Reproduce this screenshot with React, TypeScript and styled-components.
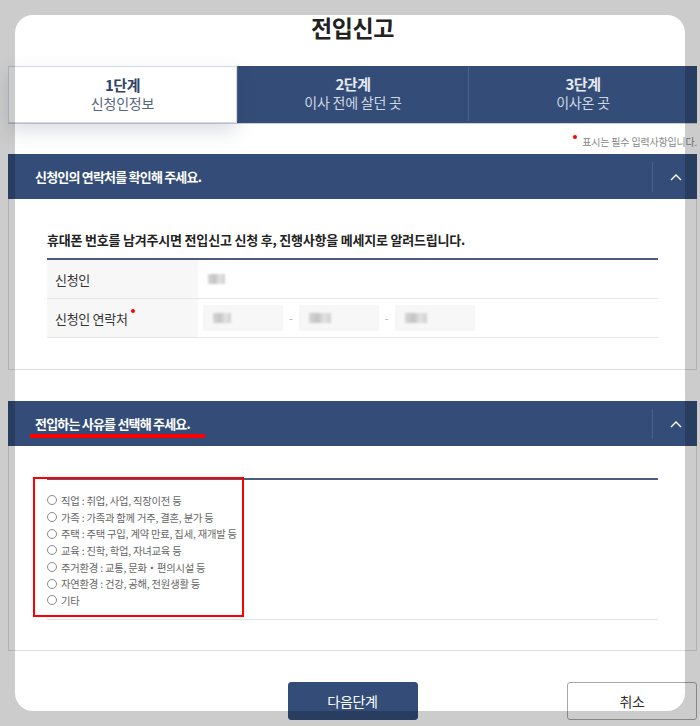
import styled, { createGlobalStyle } from "styled-components";

const GlobalStyle = createGlobalStyle`
  html, body {
    margin: 0;
    padding: 0;
    background: #fff;
  }
  body {
    font-family: "Noto Sans CJK KR", "Noto Sans", sans-serif;
    color: #222;
    overflow: hidden;
  }
`;

const navy = "#344d78";

const Page = styled.div`
  width: 689px;
  margin-left: 8px;
  padding-top: 12px;
`;

const Title = styled.h1`
  margin: 0;
  text-align: center;
  font-size: 23px;
  line-height: 30px;
  font-weight: 700;
  letter-spacing: -0.4px;
  color: #222;
`;

const Steps = styled.ul`
  list-style: none;
  margin: 24px 0 0;
  padding: 0;
  display: grid;
  grid-template-columns: 229px 231px 229px;
  background: ${navy};
  border-bottom: 1px solid #c9d1de;
`;

const Step = styled.li<{ $active?: boolean }>`
  height: 55px;
  display: flex;
  flex-direction: column;
  align-items: center;
  justify-content: center;
  background: ${(p) => (p.$active ? "#fff" : "transparent")};
  box-shadow: ${(p) => (p.$active ? "0 8px 18px rgba(40, 50, 80, 0.16)" : "none")};
  border: ${(p) => (p.$active ? "1px solid #d3d8e1" : "none")};
  position: relative;
  z-index: ${(p) => (p.$active ? 1 : 0)};

  & + & {
    border-left: 1px solid #4b6289;
  }

  strong {
    font-size: 15px;
    line-height: 18px;
    font-weight: 700;
    letter-spacing: -0.5px;
    color: ${(p) => (p.$active ? "#2e436a" : "#e6eaf2")};
  }
  span {
    font-size: 14px;
    line-height: 19px;
    letter-spacing: -0.2px;
    color: ${(p) => (p.$active ? "#556684" : "#d0d7e3")};
  }
`;

const Note = styled.p`
  margin: 0;
  padding: 11px 0 5px;
  text-align: right;
  font-size: 10px;
  line-height: 14px;
  color: #888;
  letter-spacing: -0.2px;
`;

const Dot = styled.i`
  display: inline-block;
  width: 4px;
  height: 4px;
  border-radius: 50%;
  background: #f00;
  vertical-align: top;
  margin: 0 5px 0 0;
`;

const SectionHead = styled.div`
  position: relative;
  height: 45px;
  background: ${navy};
  display: flex;
  align-items: center;
  padding-left: 27px;

  h2 {
    flex: 1;
    margin: 0;
    font-size: 13px;
    font-weight: 700;
    letter-spacing: -0.8px;
    color: #fff;
  }
`;

const Toggle = styled.button`
  width: 45px;
  height: 30px;
  border: none;
  border-left: 1px solid #4b6289;
  background: transparent;
  display: flex;
  align-items: center;
  justify-content: center;
  padding: 0 0 0 2px;
`;

const Underline = styled.i`
  position: absolute;
  left: 22px;
  top: 33px;
  width: 175px;
  height: 4px;
  background: #f00;
`;

const SectionBody = styled.div<{ $top: number; $bottom: number }>`
  position: relative;
  border: 1px solid #dedede;
  border-top: none;
  padding: ${(p) => p.$top}px 38px ${(p) => p.$bottom}px;
`;

const Lead = styled.p`
  margin: 0 0 9px;
  font-size: 13px;
  line-height: 18px;
  font-weight: 700;
  letter-spacing: -0.2px;
  color: #222;
`;

const Table = styled.div`
  border-top: 2px solid #4a5d80;
`;

const Row = styled.div`
  display: grid;
  grid-template-columns: 151px 1fr;
  height: 38px;
  border-bottom: 1px solid #e6e6e6;
`;

const Label = styled.div`
  background: #f7f7f7;
  display: flex;
  align-items: center;
  padding-left: 8px;
  font-size: 13px;
  letter-spacing: -0.3px;
  color: #333;

  i {
    align-self: flex-start;
    margin: 10px 0 0 3px;
  }
`;

const Value = styled.div`
  display: flex;
  align-items: center;
  padding-left: 5px;
  gap: 6px;
  color: #aaa;
  font-size: 11px;
`;

const Masked = styled.span<{ $w: number }>`
  display: inline-block;
  width: ${(p) => p.$w}px;
  height: 10px;
  background: linear-gradient(90deg, #d9d4d9, #c4c4c4 40%, #e2e2e2 70%, #cfcfcf);
  filter: blur(1.2px);
`;

const PhoneBox = styled.span`
  width: 80px;
  height: 26px;
  background: #f7f7f7;
  display: flex;
  align-items: center;
  padding-left: 10px;
  box-sizing: border-box;
`;

const List = styled.ul`
  list-style: none;
  margin: 0;
  padding: 12px 0 10px;
  border-top: 2px solid #4a5d80;
  border-bottom: 1px solid #e3e3e3;
`;

const Item = styled.li`
  display: flex;
  align-items: center;
  gap: 4px;
  height: 16.7px;
  font-size: 10.3px;
  letter-spacing: -0.2px;
  color: #666;
`;

const Radio = styled.span`
  width: 8px;
  height: 8px;
  border: 1px solid #888;
  border-radius: 50%;
  background: #fff;
`;

const Highlight = styled.div`
  position: absolute;
  left: 24px;
  top: 31px;
  width: 207px;
  height: 136px;
  border: 2px solid #f00;
`;

const Actions = styled.div`
  margin-top: 31px;
  display: grid;
  grid-template-columns: 1fr 130px 1fr;
  align-items: center;
`;

const Button = styled.button<{ $primary?: boolean }>`
  grid-column: ${(p) => (p.$primary ? 2 : 3)};
  justify-self: ${(p) => (p.$primary ? "center" : "end")};
  width: 130px;
  height: 38px;
  border-radius: 3px;
  font-family: inherit;
  font-size: 14px;
  letter-spacing: -0.3px;
  border: 1px solid ${(p) => (p.$primary ? navy : "#a8a8a8")};
  background: ${(p) => (p.$primary ? navy : "#fff")};
  color: ${(p) => (p.$primary ? "#fff" : "#333")};
`;

const Gap = styled.div`
  height: 31px;
`;

const Spotlight = styled.div`
  position: fixed;
  left: 15px;
  top: 15px;
  width: 670px;
  height: 696px;
  border-radius: 18px;
  box-shadow: 0 0 0 1200px rgba(0, 0, 0, 0.2);
  pointer-events: none;
  z-index: 10;
`;

const Chevron = () => (
  <svg width="12" height="8" viewBox="0 0 12 8">
    <polyline points="1,7 6,2 11,7" fill="none" stroke="#fff" strokeWidth="1.4" />
  </svg>
);

const reasons = [
  "직업 : 취업, 사업, 직장이전 등",
  "가족 : 가족과 함께 거주, 결혼, 분가 등",
  "주택 : 주택 구입, 계약 만료, 집세, 재개발 등",
  "교육 : 진학, 학업, 자녀교육 등",
  "주거환경 : 교통, 문화・편의시설 등",
  "자연환경 : 건강, 공해, 전원생활 등",
  "기타",
];

export default function App() {
  return (
    <>
      <GlobalStyle />
      <Page>
        <Title>전입신고</Title>
        <Steps>
          <Step $active>
            <strong>1단계</strong>
            <span>신청인정보</span>
          </Step>
          <Step>
            <strong>2단계</strong>
            <span>이사 전에 살던 곳</span>
          </Step>
          <Step>
            <strong>3단계</strong>
            <span>이사온 곳</span>
          </Step>
        </Steps>
        <Note>
          <Dot />
          표시는 필수 입력사항입니다.
        </Note>

        <SectionHead>
          <h2>신청인의 연락처를 확인해 주세요.</h2>
          <Toggle aria-label="접기">
            <Chevron />
          </Toggle>
        </SectionHead>
        <SectionBody $top={32} $bottom={31}>
          <Lead>휴대폰 번호를 남겨주시면 전입신고 신청 후, 진행사항을 메세지로 알려드립니다.</Lead>
          <Table>
            <Row>
              <Label>신청인</Label>
              <Value>
                <Masked $w={17} style={{ marginLeft: 5 }} />
              </Value>
            </Row>
            <Row>
              <Label>
                신청인 연락처
                <Dot />
              </Label>
              <Value>
                <PhoneBox>
                  <Masked $w={18} />
                </PhoneBox>
                -
                <PhoneBox>
                  <Masked $w={22} />
                </PhoneBox>
                -
                <PhoneBox>
                  <Masked $w={22} />
                </PhoneBox>
              </Value>
            </Row>
          </Table>
        </SectionBody>

        <Gap />

        <SectionHead>
          <h2>전입하는 사유를 선택해 주세요.</h2>
          <Underline />
          <Toggle aria-label="접기">
            <Chevron />
          </Toggle>
        </SectionHead>
        <SectionBody $top={32} $bottom={30}>
          <List>
            {reasons.map((r) => (
              <Item key={r}>
                <Radio />
                {r}
              </Item>
            ))}
          </List>
          <Highlight />
        </SectionBody>

        <Actions>
          <Button $primary>다음단계</Button>
          <Button>취소</Button>
        </Actions>
      </Page>
      <Spotlight />
    </>
  );
}
